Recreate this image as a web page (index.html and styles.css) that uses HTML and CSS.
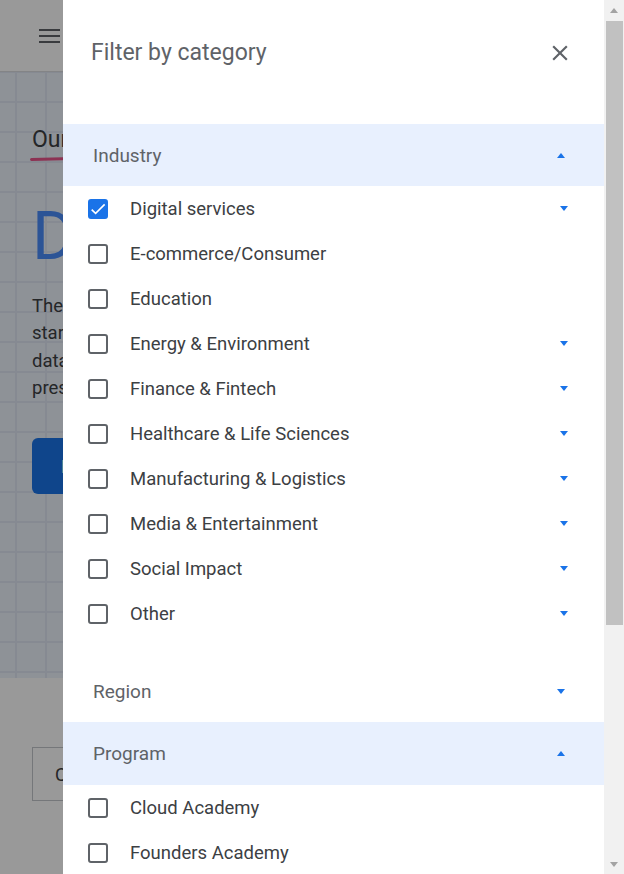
FILE: index.html
```html
<!DOCTYPE html>
<html lang="en">
<head>
<meta charset="utf-8">
<title>Filter by category</title>
<link rel="stylesheet" href="styles.css">
</head>
<body>
<div class="viewport">
  <div class="page">
    <div class="page-inner">
      <header class="topbar">
        <div class="hamburger"><span></span><span></span><span></span></div>
      </header>
      <section class="hero">
        <h2 class="eyebrow">Our</h2>
        <div class="squiggle"></div>
        <h1 class="hero-title">D</h1>
        <p class="hero-text"><span>The</span><span>star</span><span>data</span><span>pres</span></p>
        <a class="hero-btn">E</a>
      </section>
      <section class="below">
        <div class="outline-box">C</div>
      </section>
    </div>
  </div>
  <div class="scrim"></div>
  <aside class="drawer">
    <div class="drawer-head">
      <h2 class="drawer-title">Filter by category</h2>
      <button class="close" aria-label="Close">
        <svg width="26" height="26" viewBox="0 0 24 24"><path d="M19 6.41L17.59 5 12 10.59 6.41 5 5 6.41 10.59 12 5 17.59 6.41 19 12 13.41 17.59 19 19 17.59 13.41 12z" fill="#5f6368"/></svg>
      </button>
    </div>

    <div class="cat-head open"><span>Industry</span><i class="tri up"></i></div>
    <ul class="items">
      <li class="item"><span class="box checked"><svg width="16" height="16" viewBox="2 2 20 20"><path d="M9 16.17L4.83 12l-1.42 1.41L9 19 21 7l-1.41-1.41z" fill="#fff"/></svg></span><span class="label">Digital services</span><i class="tri down"></i></li>
      <li class="item"><span class="box"></span><span class="label">E-commerce/Consumer</span></li>
      <li class="item"><span class="box"></span><span class="label">Education</span></li>
      <li class="item"><span class="box"></span><span class="label">Energy &amp; Environment</span><i class="tri down"></i></li>
      <li class="item"><span class="box"></span><span class="label">Finance &amp; Fintech</span><i class="tri down"></i></li>
      <li class="item"><span class="box"></span><span class="label">Healthcare &amp; Life Sciences</span><i class="tri down"></i></li>
      <li class="item"><span class="box"></span><span class="label">Manufacturing &amp; Logistics</span><i class="tri down"></i></li>
      <li class="item"><span class="box"></span><span class="label">Media &amp; Entertainment</span><i class="tri down"></i></li>
      <li class="item"><span class="box"></span><span class="label">Social Impact</span><i class="tri down"></i></li>
      <li class="item"><span class="box"></span><span class="label">Other</span><i class="tri down"></i></li>
    </ul>

    <div class="cat-head"><span>Region</span><i class="tri down"></i></div>

    <div class="cat-head open tall"><span>Program</span><i class="tri up"></i></div>
    <ul class="items">
      <li class="item"><span class="box"></span><span class="label">Cloud Academy</span></li>
      <li class="item"><span class="box"></span><span class="label">Founders Academy</span></li>
    </ul>
  </aside>
</div>
<div class="scrollbar">
  <div class="sb-btn"><i class="sb-tri up"></i></div>
  <div class="sb-track"><div class="sb-thumb"></div></div>
  <div class="sb-btn"><i class="sb-tri down"></i></div>
</div>
</body>
</html>
```
FILE: styles.css
```css
* { box-sizing: border-box; }
html, body { margin: 0; padding: 0; }
body {
  display: flex;
  width: 624px;
  height: 874px;
  overflow: hidden;
  font-family: Roboto, "Noto Sans", Arial, sans-serif;
  background: #fff;
}

/* ---------- background page (only its left edge shows) ---------- */
.viewport {
  position: relative;
  flex: 1;
  overflow: hidden;
  background: #fff;
}
.page {
  width: 63px;
  height: 100%;
  overflow: hidden;
}
.page-inner { width: 604px; }
.topbar {
  height: 72px;
  background: #fff;
  border-bottom: 1px solid #dadce0;
  display: flex;
  align-items: center;
  padding-left: 39px;
}
.hamburger {
  display: flex;
  flex-direction: column;
  gap: 3.5px;
  margin-top: 1px;
}
.hamburger span {
  display: block;
  width: 21px;
  height: 2.5px;
  background: #5f6368;
}
.hero {
  height: 606px;
  padding: 53px 32px 0;
  background-color: #edf3fc;
  background-image:
    linear-gradient(to right, #dfe6f3 2px, transparent 2px),
    linear-gradient(to bottom, #dfe6f3 2px, transparent 2px);
  background-size: 30px 30px;
  background-position: 15px 29px;
}
.eyebrow {
  margin: 0;
  font-size: 23px;
  line-height: 30px;
  font-weight: 400;
  color: #3c4043;
}
.squiggle {
  width: 130px;
  height: 3px;
  margin-top: 3px;
  margin-left: -2px;
  border-radius: 2px;
  background: #e9548a;
  transform: rotate(-1.5deg);
  transform-origin: left center;
}
.hero-title {
  margin: 40px 0 0;
  font-size: 66px;
  line-height: 72px;
  font-weight: 400;
  color: #4a8cfb;
}
.hero-text {
  margin: 20px 0 0;
  font-size: 18.5px;
  line-height: 27.3px;
  color: #3c4043;
}
.hero-text span { display: block; }
.hero-btn {
  display: inline-flex;
  align-items: center;
  margin-top: 36px;
  width: 200px;
  height: 56px;
  padding: 0 29px;
  border-radius: 6px;
  background: #1a73e8;
  color: #fff;
  font-size: 18px;
  font-weight: 500;
}
.below {
  padding: 69px 32px 0;
}
.outline-box {
  width: 220px;
  height: 54px;
  border: 1.5px solid #c4c7cc;
  display: flex;
  align-items: center;
  padding-left: 22px;
  font-size: 18px;
  color: #3c4043;
}
.scrim {
  position: absolute;
  inset: 0;
  background: rgba(0, 0, 0, 0.4);
}

/* ---------- drawer ---------- */
.drawer {
  position: absolute;
  top: 0;
  bottom: 0;
  left: 63px;
  right: 0;
  background: #fff;
  overflow: hidden;
}
.drawer-head {
  height: 124px;
  display: flex;
  align-items: flex-start;
  justify-content: space-between;
  padding: 38px 31px 0 28px;
}
.drawer-title {
  margin: 0;
  font-size: 23px;
  line-height: 30px;
  font-weight: 400;
  color: #5f6368;
}
.close {
  width: 26px;
  height: 26px;
  padding: 0;
  margin-top: 2px;
  border: 0;
  background: none;
  display: flex;
}
.cat-head {
  height: 62px;
  display: flex;
  align-items: center;
  justify-content: space-between;
  padding: 0 39px 0 30px;
  font-size: 19px;
  color: #5f6368;
}
.cat-head.open { background: #e8f0fe; }
.cat-head.tall { height: 63px; }
.items {
  list-style: none;
  margin: 0;
  padding: 0 0 24px;
}
.item {
  height: 45px;
  display: flex;
  align-items: center;
  padding: 0 36px 0 25px;
  font-size: 18.5px;
  color: #3c4043;
}
.box {
  flex: none;
  width: 20px;
  height: 20px;
  border: 2px solid #5f6368;
  border-radius: 3px;
  display: flex;
  align-items: center;
  justify-content: center;
}
.box.checked {
  background: #1a73e8;
  border-color: #1a73e8;
}
.label {
  flex: 1;
  margin-left: 22px;
  white-space: nowrap;
}
.tri {
  display: block;
  width: 0;
  height: 0;
  border-left: 4.5px solid transparent;
  border-right: 4.5px solid transparent;
}
.tri.up { border-bottom: 5px solid #1a73e8; }
.tri.down { border-top: 5px solid #1a73e8; }

/* ---------- scrollbar ---------- */
.scrollbar {
  flex: none;
  width: 20px;
  height: 874px;
  background: #f1f1f1;
  display: flex;
  flex-direction: column;
}
.sb-btn {
  height: 20px;
  display: flex;
  align-items: center;
  justify-content: center;
}
.sb-tri {
  display: block;
  width: 0;
  height: 0;
  border-left: 4.5px solid transparent;
  border-right: 4.5px solid transparent;
}
.sb-tri.up { border-bottom: 5px solid #a3a3a3; }
.sb-tri.down { border-top: 5px solid #a3a3a3; }
.sb-track {
  flex: 1;
  padding: 1px 1px 0 2px;
}
.sb-thumb {
  height: 604px;
  background: #c1c1c1;
}
```
